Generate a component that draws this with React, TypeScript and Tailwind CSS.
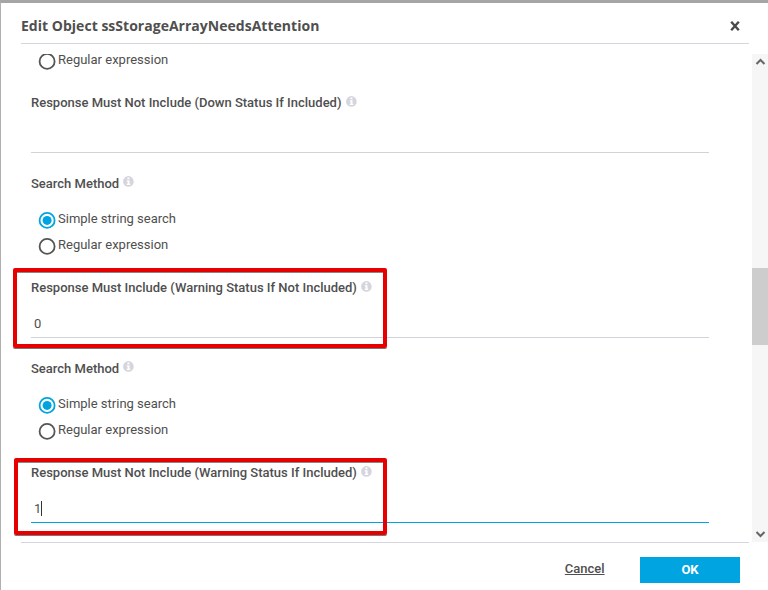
function InfoIcon({ low = false }: { low?: boolean }) {
  return (
    <svg className={`ml-[4px] h-[11px] w-[11px] shrink-0 ${low ? "mt-[4px]" : "mt-[3px]"}`} viewBox="0 0 11 11">
      <circle cx="5.4" cy="5.4" r="5.3" fill="#d5d6dd" />
      <path d="M4.4 1.6h2v1.7h-2zM3.8 4.3h2.7v3.4h.8V9H3.7V7.7h.9V5.5h-.8z" fill="#fff" />
    </svg>
  );
}

function Label({ text, lowIcon = false }: { text: string; lowIcon?: boolean }) {
  return (
    <div className="flex h-5 items-start text-[13px] font-medium">
      <span className="pt-px leading-5 whitespace-nowrap">{text}</span>
      <InfoIcon low={lowIcon} />
    </div>
  );
}

function Radio({ text, checked = false }: { text: string; checked?: boolean }) {
  return (
    <div className="flex h-[26px] items-center pl-[7px] text-[13px]">
      <svg className="mt-[4px] mr-[2px] h-[18px] w-[18px]" viewBox="0 0 18 18">
        <circle cx="9.1" cy="9.4" r="7.5" fill="none" strokeWidth="1.8" stroke={checked ? "#00a4e0" : "#555"} />
        {checked && <circle cx="9.1" cy="9.4" r="4.5" fill="#00a4e0" />}
      </svg>
      <span className="mt-[2px] leading-4">{text}</span>
    </div>
  );
}

function Field({ label, value, focused = false }: { label: string; value: string; focused?: boolean }) {
  return (
    <div className="pt-5">
      <Label text={label} lowIcon />
      <div
        className={`flex h-[41px] items-center border-b pt-[13px] pl-[3px] text-[13px] ${
          focused ? "border-[#00a4e0]" : "border-[#d2d3d8]"
        }`}
      >
        <span>{value}</span>
        {focused && <span className="h-[15px] w-px bg-[#333]" />}
      </div>
    </div>
  );
}

function SearchMethod() {
  return (
    <div className="pt-5">
      <Label text="Search Method" />
      <div className="pt-3">
        <Radio text="Simple string search" checked />
        <Radio text="Regular expression" />
      </div>
    </div>
  );
}

function Chevron({ down = false }: { down?: boolean }) {
  return (
    <svg className={`h-4 w-4 ${down ? "-scale-y-100" : ""}`} viewBox="0 0 16 16">
      <path d="M4.5 10 8.5 6l4 4" fill="none" stroke="#666" strokeWidth="2" />
    </svg>
  );
}

export default function App() {
  return (
    <div className="relative flex h-[590px] w-[768px] flex-col overflow-hidden border-t-[3px] border-l border-t-[#a5a5a5] border-l-[#b0b0b0] bg-white font-['Roboto',sans-serif] text-[#4f4f4f]">
      <header className="mr-[19px] ml-5 flex h-[41px] shrink-0 items-center justify-between border-b border-[#d5d6dd] pt-[5px] pr-[9px]">
        <h1 className="font-['Open_Sans',sans-serif] text-[14px] font-bold tracking-[0.02px]">Edit Object ssStorageArrayNeedsAttention</h1>
        <svg className="mt-px h-[10px] w-[10px]" viewBox="0 0 10 10">
          <path d="M1.2 .8 8.8 9.2M8.8 .8 1.2 9.2" stroke="#4a4a4a" strokeWidth="2.4" />
        </svg>
      </header>
      <div className="mt-[10px] flex h-[488px] shrink-0 justify-between">
        <main className="ml-[30px] w-[678px] overflow-hidden">
          <div className="-mt-2">
            <Radio text="Regular expression" />
            <Field label="Response Must Not Include (Down Status If Included)" value="" />
            <SearchMethod />
            <Field label="Response Must Include (Warning Status If Not Included)" value="0" />
            <SearchMethod />
            <Field label="Response Must Not Include (Warning Status If Included)" value="1" focused />
          </div>
        </main>
        <div className="flex w-4 flex-col bg-[#f6f6f6]">
          <Chevron />
          <div className="mt-[198px] mb-auto h-[77px] bg-[#cdcdcd]" />
          <Chevron down />
        </div>
      </div>
      <footer className="mr-[19px] ml-5 flex h-[48px] shrink-0 items-start justify-end border-t border-[#d5d6dd] pr-[9px] text-[13px] font-medium">
        <button className="mt-[16px] mr-[35.4px] leading-5 underline">Cancel</button>
        <button className="mt-[14px] h-[26px] w-[100px] bg-[#00a4e0] font-bold text-white">OK</button>
      </footer>
      <div className="absolute top-[265px] left-[12px] h-[80px] w-[374px] rounded-[2px] border-4 border-[#e60000] shadow-[0_1px_0_#777,inset_0_1px_0_#888]" />
      <div className="absolute top-[455px] left-[13px] h-[77px] w-[373px] rounded-[2px] border-4 border-[#e60000] shadow-[0_1px_0_#777,inset_0_1px_0_#888]" />
    </div>
  );
}
